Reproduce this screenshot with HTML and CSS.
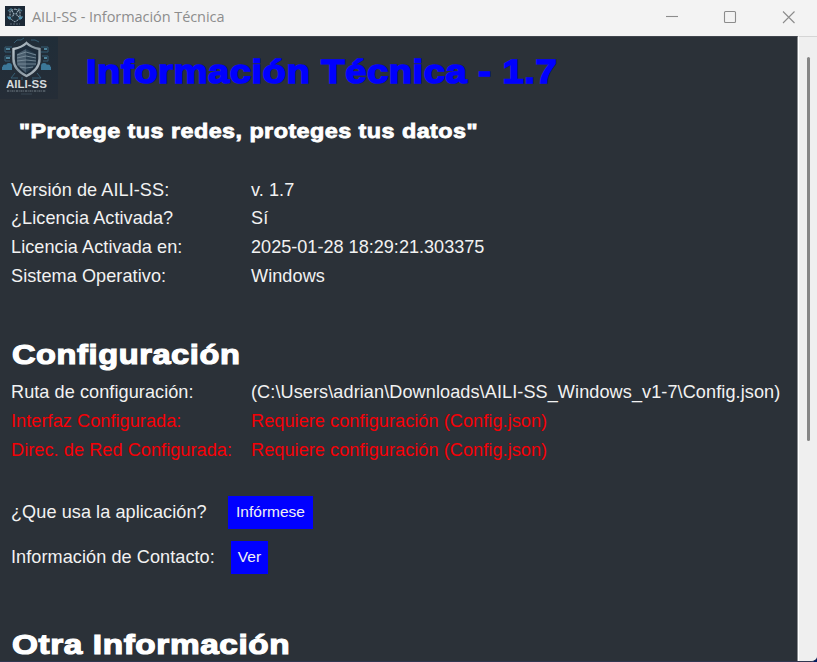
FILE: index.html
```
<!DOCTYPE html>
<html lang="es">
<head>
<meta charset="utf-8">
<title>AILI-SS - Información Técnica</title>
<link rel="stylesheet" href="styles.css">
</head>
<body>
<div class="window">
  <header class="titlebar">
    <svg class="app-icon" viewBox="0 0 20 20">
      <rect width="20" height="20" fill="#1c2936"/>
      <path d="M3 5l3-2 2 2M17 5l-3-2-2 2M2 11h3v3M18 11h-3v3" fill="none" stroke="#497386" stroke-width="1.5"/>
      <path d="M10 3l5 2v5c0 3-2 4-5 6-3-2-5-3-5-6V5z" fill="#22323f" stroke="#a9b9c4" stroke-dasharray="2 1"/>
      <path d="M7 5l2 3-2 3M13 5l-2 3 3 3" fill="none" stroke="#9db0bd" stroke-width="1.200" stroke-dasharray="1.5 .7"/>
      <path d="M3 12h3M14 12h3" stroke="#4e8dab" stroke-width="2"/>
      <path d="M5 18h10" stroke="#5a6874" stroke-dasharray="2 1"/>
    </svg>
    <span class="window-title">AILI-SS - Información Técnica</span>
    <svg class="controls" viewBox="0 0 146 36" fill="none" stroke="#8c8c8c" stroke-width="1.1">
      <path d="M15 16.5h12"/>
      <rect x="73.5" y="11.5" width="11" height="11" rx="1"/>
      <path d="M132 11.500l11.500 11.500M143.500 11.500l-11.500 11.500"/>
    </svg>
  </header>
  <div class="body">
    <main class="content">
      <div class="hero">
        <svg class="logo" viewBox="0 0 58 62">
          <defs>
            <linearGradient id="bg" x2="0" y2="1"><stop stop-color="#202d38"/><stop offset="1" stop-color="#252d37"/></linearGradient>
            <linearGradient id="rim" x2="1" y2="1"><stop stop-color="#c4ced4"/><stop offset=".5" stop-color="#82919b"/><stop offset="1" stop-color="#b9c3ca"/></linearGradient>
          </defs>
          <rect width="58" height="62" fill="url(#bg)"/>
          <g fill="none" stroke="#365f75" stroke-width="1">
            <path d="M14 6l3-3h4l3-2M39 5l-4-2h-4M12 10H5v5h6M41 10h7v5h-7M11 19H5v5h5M42 19h6v5h-5M15 36l-4 5h7M37 36l4 5h-7M22 40v3M33 40v3"/>
            <path d="M6 12h4M44 12h3M6 21h4M44 21h3" stroke="#4d8299" stroke-width="2"/>
          </g>
          <g fill="#3c7898"><circle cx="5" cy="30" r="2.500"/><circle cx="9" cy="29" r="3"/><circle cx="44" cy="29" r="3"/><circle cx="48" cy="30" r="2.500"/><path d="M2 30h10v3H2zM41 30h10v3H41z"/></g>
          <path d="M26.500 6c4 4 8 5 13 6v10c0 8-5 13-13 17-8-4-13-9-13-17V12c5-1 9-2 13-6z" fill="#1d2c3a" stroke="url(#rim)" stroke-width="2.400"/>
          <path d="M17 17l9-5v24l-9-8z" fill="#4a5e6e"/><path d="M26 12l10 5v11l-10 8z" fill="#2b4051"/>
          <path d="M17 18l9-3 10 3M17 21l9-2 10 2M17 24l9-1 10 1M18 27h18M20 30l6 1 7-1" fill="none" stroke="#8295a2" stroke-width=".8"/>
          <text class="logo-name" x="6" y="51" textLength="41" lengthAdjust="spacingAndGlyphs">AILI-SS</text>
          <path d="M7 54h39" stroke="#77838b" stroke-width="1" stroke-dasharray="2 .7 1 .8"/>
          <path d="M21 57h11" stroke="#3d4d59" stroke-width=".8"/>
        </svg>
        <h1 class="heading title">Información Técnica - 1.7</h1>
      </div>
      <p class="heading slogan">"Protege tus redes, proteges tus datos"</p>
      <dl class="facts">
        <dt>Versión de AILI-SS:</dt><dd>v. 1.7</dd>
        <dt>¿Licencia Activada?</dt><dd>Sí</dd>
        <dt>Licencia Activada en:</dt><dd class="stamp">2025-01-28 18:29:21.303375</dd>
        <dt>Sistema Operativo:</dt><dd>Windows</dd>
      </dl>
      <h2 class="heading section">Configuración</h2>
      <dl class="facts config">
        <dt>Ruta de configuración:</dt><dd class="path">(C:\Users\adrian\Downloads\AILI-SS_Windows_v1-7\Config.json)</dd>
        <dt class="missing">Interfaz Configurada:</dt><dd class="missing">Requiere configuración (Config.json)</dd>
        <dt class="missing">Direc. de Red Configurada:</dt><dd class="missing">Requiere configuración (Config.json)</dd>
      </dl>
      <div class="action uses"><span class="label">¿Que usa la aplicación?</span><button>Infórmese</button></div>
      <div class="action contact"><span class="label">Información de Contacto:</span><button>Ver</button></div>
      <h2 class="heading section other">Otra Información</h2>
    </main>
    <aside class="scrollbar"><div class="thumb"></div></aside>
  </div>
</div>
</body>
</html>
```
FILE: styles.css
```
* { box-sizing: border-box; margin: 0; padding: 0; }
body { width: 817px; height: 662px; overflow: hidden; background: #001c63; font-family: "Liberation Sans", Arial, sans-serif; }
.window { display: flex; flex-direction: column; height: 662px; border-bottom: 1px solid #303650; border-radius: 0 0 6px 0; overflow: hidden; background: #efefef; }
.titlebar { display: flex; align-items: center; flex: 0 0 36px; padding-left: 5px; background: #f3f3f3; }
.app-icon { width: 20px; height: 20px; margin-top: -4px; }
.window-title { margin: -3px 0 0 7px; font: 14.5px "Open Sans", sans-serif; letter-spacing: -.06px; color: #8d8d8d; white-space: nowrap; }
.controls { width: 146px; height: 36px; margin-left: auto; margin-right: 20px; }
.body { display: flex; flex: 1; min-height: 0; }
.content { width: 798px; overflow: hidden; background: #2b3138; border-top: 1px solid #40454c; border-right: 1px solid #8a8d90; color: #f2f2f2; }
.scrollbar { flex: 1; padding: 20px 0 0 8px; border-top: 1px solid #d5d5d5; border-left: 1px solid #fff; background: #efefef; }
.thumb { width: 3px; height: 384px; border-radius: 2px; background: #868686; }
.hero { display: flex; height: 62px; }
.logo { width: 58px; height: 62px; flex: none; }
.logo-name { font: bold 11px "Liberation Sans", sans-serif; fill: #d5dadd; }
.heading { color: #fff; font-weight: bold; white-space: nowrap; transform-origin: 0 50%; }
.title { margin-left: 28px; font-size: 34px; line-height: 68px; color: #00f; letter-spacing: .4px; -webkit-text-stroke: 1.5px #00f; transform: scaleX(1.127); }
.slogan { height: 30px; margin: 17px 0 0 19px; font-size: 20.5px; line-height: 30px; letter-spacing: .4px; -webkit-text-stroke: .8px #fff; transform: scaleX(1.139); }
.facts { display: grid; grid-template-columns: 240px 1fr; grid-auto-rows: 28.8px; margin: 29.6px 0 0 11px; font-size: 18.1px; line-height: 28.8px; letter-spacing: .07px; white-space: nowrap; }
.stamp { letter-spacing: 0; }
.path { letter-spacing: .09px; }
.section { height: 40px; margin: 43.4px 0 0 12px; font-size: 28.5px; line-height: 40px; letter-spacing: .5px; -webkit-text-stroke: 1.2px #fff; transform: scaleX(1.144); }
.config { margin-top: 4px; }
.missing { color: #f60006; }
.action { display: flex; align-items: center; height: 33px; margin-left: 11px; font-size: 18.1px; letter-spacing: .07px; }
.uses { margin-top: 31px; }
.contact { margin-top: 12px; }
.label { white-space: nowrap; }
button { height: 33px; padding-bottom: 1px; border: 0; background: #00f; color: #f2f2f2; font: 15.5px "Liberation Sans", sans-serif; }
.uses .label { width: 217px; }
.uses button { width: 85px; }
.contact .label { width: 220px; }
.contact button { width: 37px; }
.other { margin-top: 50px; transform: scaleX(1.171); }
```
